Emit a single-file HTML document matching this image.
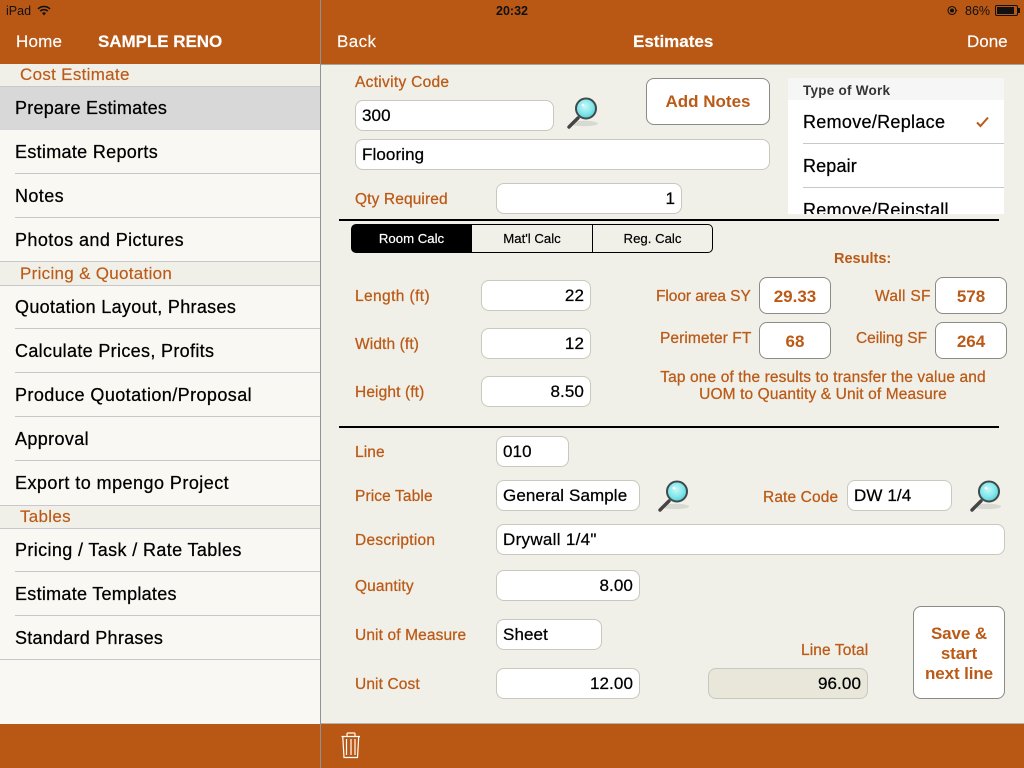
<!DOCTYPE html>
<html><head><meta charset="utf-8"><style>
html,body{margin:0;padding:0}
body{width:1024px;height:768px;position:relative;overflow:hidden;background:#f0efe8;font-family:"Liberation Sans",sans-serif;color:#000}
div,span{position:absolute;white-space:nowrap;box-sizing:border-box}
.nav{color:#fff;font-size:17px;line-height:20px;top:32px;-webkit-text-stroke:.15px #fff}
.hd{color:#bb5a16;font-size:17px;line-height:20px;left:20px;letter-spacing:.3px;-webkit-text-stroke:.15px #bb5a16}
.row{left:15px;font-size:18px;line-height:22px;-webkit-text-stroke:.25px #000}
.sep{left:15px;width:305px;height:1px;background:#c8c7cc}
.full{left:0;width:320px;height:1px;background:#c8c7cc}
.l{color:#bb5a16;font-size:15.5px;line-height:18px;margin-top:1px;letter-spacing:.12px;-webkit-text-stroke:.25px #bb5a16}
.f{background:#fff;border:1px solid #c9c8be;border-radius:8px;height:31px;font-size:17px;line-height:29px;padding:0 6px;letter-spacing:.1px;-webkit-text-stroke:.25px #000}
.r{text-align:right}
.b{background:#fff;border:1px solid #8a8a86;border-radius:8px;color:#bb5a16;font-weight:bold;text-align:center}
.res{width:72px;height:37px;font-size:17px;line-height:38px}
.seg{top:224px;height:29px;border:1px solid #000;border-left:0;font-size:13.2px;line-height:27px;text-align:center;background:#f0efe8;-webkit-text-stroke:.2px}
.tw{font-size:18px;line-height:22px;left:15px;letter-spacing:.3px;-webkit-text-stroke:.25px #000}
svg{position:absolute;overflow:visible}
</style></head><body>

<!-- sidebar -->
<div style="left:0;top:64px;width:320px;height:660px;background:#f9f8f3"></div>
<div style="left:0;top:64px;width:320px;height:22px;background:#f0efe8"></div>
<div style="left:0;top:86px;width:320px;height:44px;background:#d8d8d8"></div>
<div style="left:0;top:262px;width:320px;height:23px;background:#f0efe8"></div>
<div style="left:0;top:506px;width:320px;height:22px;background:#f0efe8"></div>
<div class="full" style="top:86px"></div>
<div class="full" style="top:261px"></div>
<div class="full" style="top:285px"></div>
<div class="full" style="top:505px"></div>
<div class="full" style="top:528px"></div>
<div class="full" style="top:659px"></div>
<div class="sep" style="top:173px"></div>
<div class="sep" style="top:217px"></div>
<div class="sep" style="top:328px"></div>
<div class="sep" style="top:372px"></div>
<div class="sep" style="top:416px"></div>
<div class="sep" style="top:460px"></div>
<div class="sep" style="top:571px"></div>
<div class="sep" style="top:615px"></div>

<div class="hd" style="top:65px">Cost Estimate</div>
<div class="row" style="top:97px;letter-spacing:.24px">Prepare Estimates</div>
<div class="row" style="top:141px;letter-spacing:.31px">Estimate Reports</div>
<div class="row" style="top:185px;letter-spacing:.4px">Notes</div>
<div class="row" style="top:229px;letter-spacing:.42px">Photos and Pictures</div>
<div class="hd" style="top:264px">Pricing &amp; Quotation</div>
<div class="row" style="top:296px;letter-spacing:.32px">Quotation Layout, Phrases</div>
<div class="row" style="top:340px;letter-spacing:.33px">Calculate Prices, Profits</div>
<div class="row" style="top:384px;letter-spacing:.42px">Produce Quotation/Proposal</div>
<div class="row" style="top:428px;letter-spacing:.37px">Approval</div>
<div class="row" style="top:472px;letter-spacing:.46px">Export to mpengo Project</div>
<div class="hd" style="top:507px">Tables</div>
<div class="row" style="top:539px;letter-spacing:.37px">Pricing / Task / Rate Tables</div>
<div class="row" style="top:583px;letter-spacing:.28px">Estimate Templates</div>
<div class="row" style="top:627px;letter-spacing:.25px">Standard Phrases</div>

<!-- bars -->
<div style="left:0;top:0;width:1024px;height:64px;background:#b95815"></div>
<div style="left:321px;top:64px;width:703px;height:1px;background:#a5a39c"></div>
<div style="left:0;top:724px;width:1024px;height:44px;background:#b95815"></div>
<div style="left:321px;top:723px;width:703px;height:1px;background:#b5b3ab"></div>
<div style="left:320px;top:0;width:1px;height:768px;background:#8f9296"></div>

<!-- status -->
<div style="left:6px;top:3px;font-size:12.5px;line-height:16px;color:#111">iPad</div>
<svg style="left:37px;top:5px" width="14" height="11" viewBox="0 0 14 11"><path d="M1 4 A8.5 8.5 0 0 1 13 4 M3.2 6.2 A5.5 5.5 0 0 1 10.8 6.2" fill="none" stroke="#111" stroke-width="1.5"/><path d="M5 8 A3 3 0 0 1 9 8 L7 10.5Z" fill="#111"/></svg>
<div style="left:496px;top:3px;font-size:12.5px;line-height:16px;font-weight:bold;color:#111">20:32</div>
<svg style="left:947px;top:5px" width="11" height="11" viewBox="0 0 11 11"><circle cx="5" cy="5.5" r="4" fill="none" stroke="#111" stroke-width="1.1"/><circle cx="5" cy="5.5" r="2" fill="#111"/><path d="M9 4.500 L10.600 5.500 L9 6.500Z" fill="#111"/></svg>
<div style="left:965px;top:3px;font-size:12.5px;line-height:16px;color:#111">86%</div>
<div style="left:995px;top:5px;width:23px;height:11px;border:1px solid #111;border-radius:2px"></div>
<div style="left:997px;top:7px;width:17px;height:7px;background:#111"></div>
<div style="left:1018px;top:8px;width:1.5px;height:5px;background:#111"></div>

<div class="nav" style="left:16px;letter-spacing:.2px">Home</div>
<div class="nav" style="left:98px;font-weight:bold;letter-spacing:-.05px">SAMPLE RENO</div>
<div class="nav" style="left:337px;letter-spacing:.4px">Back</div>
<div class="nav" style="left:633px;font-weight:bold">Estimates</div>
<div class="nav" style="left:967px">Done</div>

<!-- top form -->
<div class="l" style="left:355px;top:73px;letter-spacing:.3px">Activity Code</div>
<div class="f" style="left:355px;top:100px;width:199px">300</div>
<div class="f" style="left:355px;top:139px;width:415px">Flooring</div>
<div class="l" style="left:355px;top:190px">Qty Required</div>
<div class="f r" style="left:496px;top:183px;width:186px">1</div>
<div class="b" style="left:646px;top:78px;width:124px;height:47px;font-size:17px;line-height:46px">Add Notes</div>

<div style="left:788px;top:78px;width:216px;height:136px;background:#fff;overflow:hidden">
  <div style="left:0;top:0;width:216px;height:22px;background:#f6f6f6"></div>
  <div style="left:15px;top:5px;font-size:13.5px;line-height:16px;font-weight:bold;color:#333;letter-spacing:.25px">Type of Work</div>
  <div class="tw" style="top:33px">Remove/Replace</div>
  <div style="left:15px;top:65px;width:201px;height:1px;background:#c8c7cc"></div>
  <div class="tw" style="top:77px;letter-spacing:.15px">Repair</div>
  <div style="left:15px;top:109px;width:201px;height:1px;background:#c8c7cc"></div>
  <div class="tw" style="top:121px">Remove/Reinstall</div>
</div>
<svg style="left:976px;top:116px" width="13" height="12" viewBox="0 0 13 12"><path d="M1 6.500 L4.500 10 L12 1.500" fill="none" stroke="#bb5a16" stroke-width="2"/></svg>

<div style="left:339px;top:219px;width:660px;height:2px;background:#000"></div>
<div style="left:339px;top:426px;width:660px;height:2px;background:#000"></div>

<!-- segmented -->
<div class="seg" style="left:351px;width:121px;background:#000;color:#fff;border-radius:5px 0 0 5px;border-left:1px solid #000">Room Calc</div>
<div class="seg" style="left:472px;width:121px">Mat'l Calc</div>
<div class="seg" style="left:593px;width:120px;border-radius:0 5px 5px 0">Reg. Calc</div>

<!-- calc -->
<div class="l" style="left:355px;top:287px;letter-spacing:.4px">Length (ft)</div>
<div class="f r" style="left:481px;top:280px;width:110px">22</div>
<div class="l" style="left:355px;top:335px">Width (ft)</div>
<div class="f r" style="left:481px;top:328px;width:110px">12</div>
<div class="l" style="left:355px;top:383px">Height (ft)</div>
<div class="f r" style="left:481px;top:376px;width:110px">8.50</div>

<div style="left:834px;top:250px;font-weight:bold;color:#bb5a16;font-size:14.5px;line-height:18px">Results:</div>
<div class="l" style="left:656px;top:287px;letter-spacing:-.07px">Floor area SY</div>
<div class="b res" style="left:759px;top:277px">29.33</div>
<div class="l" style="left:875px;top:287px;letter-spacing:.3px">Wall SF</div>
<div class="b res" style="left:935px;top:277px">578</div>
<div class="l" style="left:660px;top:329px;letter-spacing:.08px">Perimeter FT</div>
<div class="b res" style="left:759px;top:322px">68</div>
<div class="l" style="left:856px;top:329px;letter-spacing:-.05px">Ceiling SF</div>
<div class="b res" style="left:935px;top:322px">264</div>
<div class="l" style="left:623px;width:400px;text-align:center;top:368px">Tap one of the results to transfer the value and</div>
<div class="l" style="left:623px;width:400px;text-align:center;top:385px">UOM to Quantity &amp; Unit of Measure</div>

<!-- line -->
<div class="l" style="left:355px;top:443px">Line</div>
<div class="f" style="left:496px;top:436px;width:73px">010</div>
<div class="l" style="left:355px;top:487px">Price Table</div>
<div class="f" style="left:496px;top:480px;width:144px">General Sample</div>
<div class="l" style="left:763px;top:488px">Rate Code</div>
<div class="f" style="left:847px;top:480px;width:105px">DW 1/4</div>
<div class="l" style="left:355px;top:531px;letter-spacing:.25px">Description</div>
<div class="f" style="left:496px;top:524px;width:509px;letter-spacing:.3px">Drywall 1/4"</div>
<div class="l" style="left:355px;top:577px">Quantity</div>
<div class="f r" style="left:496px;top:570px;width:144px">8.00</div>
<div class="l" style="left:355px;top:626px">Unit of Measure</div>
<div class="f" style="left:496px;top:619px;width:106px">Sheet</div>
<div class="l" style="left:355px;top:675px">Unit Cost</div>
<div class="f r" style="left:496px;top:668px;width:144px">12.00</div>
<div class="l" style="left:801px;top:641px">Line Total</div>
<div class="f r" style="left:708px;top:668px;width:160px;background:#e8e7da">96.00</div>
<div class="b" style="left:913px;top:606px;width:92px;height:93px;font-size:17px;line-height:20px;padding-top:17px;letter-spacing:-.1px">Save &amp;<br>start<br>next line</div>

<!-- magnifiers -->
<svg width="0" height="0" style="left:0;top:0"><defs><radialGradient id="lens" cx="45%" cy="40%" r="65%"><stop offset="0" stop-color="#c8f8f8"/><stop offset=".6" stop-color="#7fe6ea"/><stop offset="1" stop-color="#4fc4cc"/></radialGradient><symbol id="mag" viewBox="0 0 36 34" overflow="visible"><ellipse cx="19" cy="27.500" rx="14" ry="2.700" fill="#d9d9d4"/><path d="M13 22 L4 31" stroke="#444" stroke-width="3.400" stroke-linecap="round"/><circle cx="21" cy="12.500" r="10" fill="url(#lens)" stroke="#3f4a4c" stroke-width="2"/><circle cx="18" cy="9" r="1.300" fill="#fff"/></symbol></defs></svg>
<svg style="left:565px;top:96px" width="36" height="34"><use href="#mag"/></svg>
<svg style="left:656px;top:479px" width="36" height="34"><use href="#mag"/></svg>
<svg style="left:968px;top:479px" width="36" height="34"><use href="#mag"/></svg>

<!-- trash -->
<svg style="left:340px;top:732px" width="22" height="27" viewBox="0 0 22 27"><path d="M1.500 4.500 H20 M7 4.500 V2 Q7 1 8 1 H14 Q15 1 15 2 V4.500 M2.800 5 L4 25.500 H17.500 L18.700 5" fill="none" stroke="#fff" stroke-width="1.200"/><path d="M6.500 7 V23 M11 7 V23 M15 7 V23" stroke="#fff" stroke-width="1.200"/></svg>

</body></html>
